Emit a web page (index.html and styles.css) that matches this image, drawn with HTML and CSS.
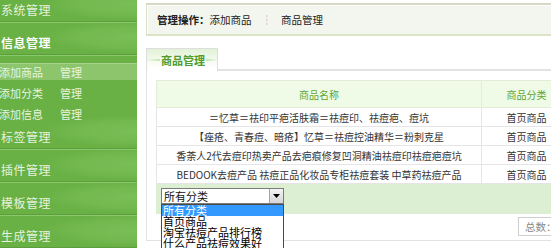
FILE: index.html
```html
<!DOCTYPE html>
<html lang="zh-CN">
<head>
<meta charset="utf-8">
<title>商品管理</title>
<link rel="stylesheet" href="styles.css">
</head>
<body>
<div class="page">
  <aside class="side">
    <div class="sec">系统管理</div>
    <div class="sec sec-on">信息管理</div>
    <ul class="sub">
      <li class="on"><span class="sub-name">添加商品</span><span>管理</span></li>
      <li><span class="sub-name">添加分类</span><span>管理</span></li>
      <li><span class="sub-name">添加信息</span><span>管理</span></li>
    </ul>
    <div class="sec">标签管理</div>
    <div class="sec">插件管理</div>
    <div class="sec">模板管理</div>
    <div class="sec">生成管理</div>
  </aside>
  <main class="main">
    <div class="ops"><b>管理操作：</b>添加商品<span class="sep">┆</span>商品管理</div>
    <div class="tabs">
      <div class="tab"><span class="tab-text">商品管理</span></div>
      <div class="tab-rest"></div>
    </div>
    <div class="panel">
      <table class="grid">
        <colgroup><col class="c1"><col class="c2"><col class="c3"></colgroup>
        <thead>
          <tr><th>商品名称</th><th>商品分类</th><th>操作</th></tr>
        </thead>
        <tbody>
          <tr><td>＝忆草＝祛印平疤活肤霜＝祛痘印、祛痘疤、痘坑</td><td>首页商品</td><td></td></tr>
          <tr><td>【痤疮、青春痘、暗疮】忆草＝祛痘控油精华＝粉刺克星</td><td>首页商品</td><td></td></tr>
          <tr><td>香荼人2代去痘印热卖产品去疤痕修复凹洞精油祛痘印祛痘疤痘坑</td><td>首页商品</td><td></td></tr>
          <tr><td>BEDOOK去痘产品 祛痘正品化妆品专柜祛痘套装 中草药祛痘产品</td><td>首页商品</td><td></td></tr>
        </tbody>
        <tfoot>
          <tr><td colspan="3" class="foot">
            <div class="select">所有分类<span class="arrow"><svg width="7" height="4" viewBox="0 0 7 4"><path d="M0 0h7L3.5 4z" fill="#000"/></svg></span>
              <ul class="dropdown">
                <li class="hl">所有分类</li>
                <li>首页商品</li>
                <li>淘宝祛痘产品排行榜</li>
                <li>什么产品祛痘效果好</li>
              </ul>
            </div>
          </td></tr>
        </tfoot>
      </table>
      <div class="pager"><span class="total">总数：4</span></div>
    </div>
  </main>
</div>
</body>
</html>
```
FILE: styles.css
```css
html, body {
  margin: 0;
  padding: 0;
  background: #fff;
  overflow: hidden;
}
body {
  font-family: "Noto Sans CJK SC", "Liberation Sans", sans-serif;
  color: #333;
}
.page {
  display: flex;
  width: max-content;
  height: 248px;
}

/* sidebar */
.side {
  width: 137px;
  flex: none;
  margin-top: -10px;
  height: 258px;
  background: #69b145;
  color: #e6f2dc;
  overflow: hidden;
}
.sec {
  height: 16px;
  line-height: 16px;
  padding: 12px 0 4px 1px;
  font-size: 12px;
  letter-spacing: 0.5px;
  border-bottom: 1px solid #8ac86c;
  box-shadow: inset 0 -1px 0 #5c9e3b;
  background:
    radial-gradient(ellipse 95px 16px at 100% 45%, #79be56 0%, #73b950 60%, rgba(104,176,68,0) 100%);
}
.sec-on {
  color: #fff;
  font-weight: bold;
}
.sub {
  list-style: none;
  margin: 0;
  padding: 6px 0 0 0;
  height: 55px;
  font-size: 11px;
  color: #e8f4df;
}
.sub li {
  display: flex;
  height: 21px;
  line-height: 21px;
  margin-left: -1px;
}
.sub li.on {
  background:
    linear-gradient(#a7d58d, #a7d58d) 0 1px / 100% 1px no-repeat,
    linear-gradient(#8cc56b, #8cc56b) 0 2px / 100% 16px no-repeat;
}
.sub-name {
  width: 61px;
}

/* main */
.main {
  margin-left: 9px;
  width: 640px;
  flex: none;
}
.ops {
  margin-top: 3px;
  height: 29px;
  border: 1px solid #d9ddc9;
  border-top: 2px solid #d6dac4;
  border-bottom: 2px solid #dbe5c5;
  border-right: none;
  background: #f3f6ee;
  box-shadow: inset 0 1px 0 #fff, inset 1px 0 0 #fff;
  padding-left: 10px;
  display: flex;
  align-items: center;
  font-size: 10.5px;
  color: #222;
}
.ops b {
  font-weight: bold;
}
.sep {
  color: #9a9a9a;
  margin: 0 9px 0 10px;
}
.tabs {
  display: flex;
  margin-top: 12px;
  height: 23px;
}
.tab {
  width: 70px;
  border: 1px solid #dedede;
  border-bottom: none;
  background: linear-gradient(#e2f2d6, #fff 85%);
  display: flex;
  align-items: center;
  font-size: 11px;
  font-weight: bold;
  color: #4f9c2c;
}
.tab::before {
  content: "";
  width: 13px;
  height: 2px;
  background: linear-gradient(to right, rgba(190,225,170,0), #c6e4b3);
}
.tab::after {
  content: "";
  flex: 1;
  height: 2px;
  background: linear-gradient(to right, #c6e4b3, rgba(190,225,170,0));
}
.tab-text {
  padding: 0 1px;
}
.tab-rest {
  flex: 1;
  border-bottom: 2px solid #e2e2e2;
}
.panel {
  border-left: 1px solid #e3e3e3;
  border-bottom: 1px solid #e2e2e2;
  padding: 9px 0 4px 9px;
}

/* table */
.grid {
  border-collapse: collapse;
  width: 620px;
  font-size: 10px;
  color: #333;
  table-layout: fixed;
}
.grid col.c1 { width: 325px; }
.grid col.c2 { width: 90px; }
.grid th {
  height: 26px;
  padding: 0;
  background: #effae7;
  color: #5ea631;
  font-weight: normal;
  border: 1px solid #e2ecd9;
  text-align: center;
}
.grid td {
  height: 18px;
  padding: 0;
  border: 1px solid #e5e5e5;
  text-align: center;
  white-space: nowrap;
  overflow: hidden;
}
.grid td.foot {
  height: 25px;
  background: #dcefd2;
  border-color: #dcefd2;
  text-align: left;
  vertical-align: top;
  padding: 4px 0 0 4px;
  overflow: visible;
}
.select {
  position: relative;
  width: 119px;
  height: 14px;
  line-height: 14px;
  padding-left: 2px;
  border: 1px solid #7b7b7b;
  background: #fff;
  font-size: 11px;
  color: #111;
}
.arrow {
  position: absolute;
  right: 0;
  top: 0;
  width: 13px;
  height: 14px;
  border-left: 1px solid #a5a5a5;
  background: linear-gradient(#f4f4f4, #d6d6d6);
  display: flex;
  align-items: center;
  justify-content: center;
}
.dropdown {
  position: absolute;
  z-index: 5;
  left: -1px;
  top: 15px;
  width: 121px;
  margin: 0;
  padding: 0;
  list-style: none;
  border: 1px solid #4a4a4a;
  background: #fff;
  font-size: 11px;
  line-height: 11px;
  color: #000;
}
.dropdown li {
  padding-left: 1px;
  height: 11px;
  white-space: nowrap;
}
.dropdown li.hl {
  background: #3399ff;
  color: #fff;
}

/* pager */
.pager {
  display: flex;
  margin-top: 3px;
}
.total {
  margin-left: 362px;
  height: 17px;
  line-height: 17px;
  padding: 0 6px;
  width: 90px;
  border: 1px solid #cfcfcf;
  color: #8a8a8a;
  font-size: 10.5px;
}
```
